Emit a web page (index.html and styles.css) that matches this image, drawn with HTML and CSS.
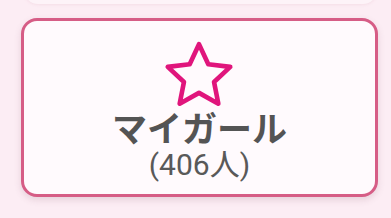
FILE: index.html
```html
<!DOCTYPE html>
<html lang="ja">
<head>
<meta charset="utf-8">
<link rel="stylesheet" href="styles.css">
</head>
<body>
<div class="prev"></div>
<div class="card">
  <svg class="star" width="74" height="70" viewBox="0 0 72 68">
    <polygon points="36,4 45.05,23.54 66.4,26.1 50.65,40.76 54.8,61.9 36,51.4 17.2,61.9 21.35,40.76 5.6,26.1 26.95,23.54" fill="none" stroke="#e0157c" stroke-width="4.5" stroke-linejoin="round"/>
  </svg>
  <div class="title">マイガール</div>
  <div class="count">(406人)</div>
</div>
</body>
</html>
```
FILE: styles.css
```css
html, body {
  margin: 0;
  padding: 0;
}
body {
  background: #fcedf4;
  width: 391px;
  height: 218px;
  overflow: hidden;
  font-family: "Noto Sans CJK JP", "Noto Sans", sans-serif;
  position: relative;
}
.prev {
  position: absolute;
  left: 24px;
  right: 14px;
  top: -20px;
  height: 24px;
  background: #fdf3f8;
  border-radius: 0 0 14px 14px;
  box-shadow: 0 1px 3px rgba(200, 120, 150, 0.12);
}
.card {
  box-sizing: border-box;
  margin: 18px 0 0 21px;
  width: 357px;
  height: 179px;
  border: 3px solid #d65d86;
  border-radius: 16px;
  background: #fffafd;
  box-shadow: 0 3px 7px rgba(120, 60, 90, 0.16);
  display: flex;
  flex-direction: column;
  align-items: center;
  padding-top: 19px;
}
.star {
  display: block;
  margin-left: -2px;
}
.title {
  font-weight: 700;
  font-size: 35px;
  line-height: 36px;
  color: #545454;
  margin-top: -1px;
}
.count {
  font-family: Roboto, "Noto Sans CJK JP", sans-serif;
  font-size: 30px;
  line-height: 30px;
  color: #595959;
  margin-top: 5px;
}
```
